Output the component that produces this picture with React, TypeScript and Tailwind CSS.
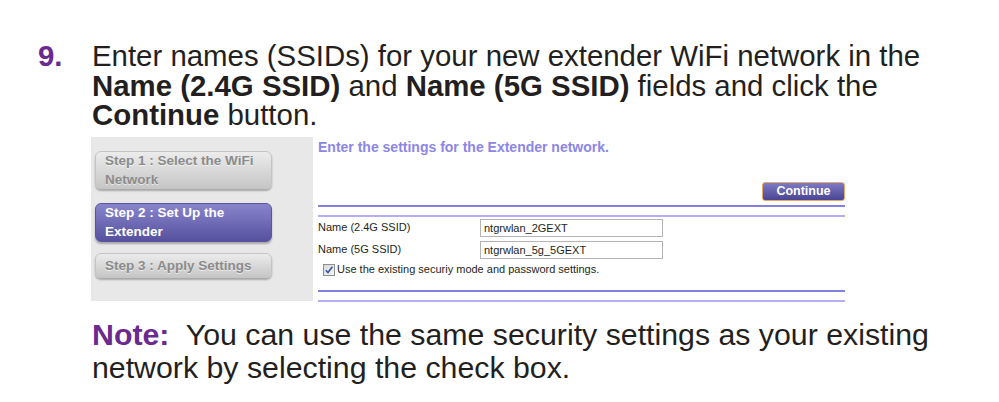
import React from 'react';

const STEPS = [
  { label: ['Step 1 : Select the WiFi', 'Network'], active: false, h: 'h-[38px]' },
  { label: ['Step 2 : Set Up the', 'Extender'], active: true, h: 'h-[39px]' },
  { label: ['Step 3 : Apply Settings'], active: false, h: 'h-[25px]' },
];

function StepButton({ label, active, h }: { label: string[]; active: boolean; h: string }) {
  return (
    <div
      className={`${h} w-[177px] rounded-[6px] px-[9px] flex flex-col justify-center text-[13.5px] font-bold leading-[19px] shadow-[0_2px_2px_rgba(0,0,0,0.28)] ${
        active
          ? 'bg-gradient-to-b from-[#8985cc] to-[#56519e] border border-[#5a55a0] text-white'
          : 'bg-gradient-to-b from-[#ececec] to-[#c6c6c6] border border-[#c4c4c4] text-[#8b8b8b] [text-shadow:0_1px_0_rgba(255,255,255,0.6)]'
      }`}
    >
      {label.map((l) => (
        <span key={l} className="whitespace-nowrap">
          {l}
        </span>
      ))}
    </div>
  );
}

function Checkbox() {
  return (
    <svg width="12" height="12" viewBox="0 0 12 12" className="shrink-0">
      <defs>
        <linearGradient id="cb" x1="0" y1="0" x2="1" y2="1">
          <stop offset="0" stopColor="#d8d8d8" />
          <stop offset="1" stopColor="#f6f6f6" />
        </linearGradient>
      </defs>
      <rect x="0.5" y="0.5" width="11" height="11" fill="url(#cb)" stroke="#8e8f8f" />
      <path d="M2.8 6.2 L5 8.6 L9.4 2.8" fill="none" stroke="#3a55a8" strokeWidth="1.6" />
    </svg>
  );
}

export default function App() {
  return (
    <div className="w-[999px] h-[402px] bg-white overflow-hidden font-['Liberation_Sans',Arial,sans-serif] text-[#231f20]">
      {/* Step heading */}
      <div className="flex pt-[41px] text-[29.4px] leading-[29.5px]">
        <span className="w-[92px] pl-[38px] font-bold text-[#6a2a8e]">9.</span>
        <p className="whitespace-nowrap">
          Enter names (SSIDs) for your new extender WiFi network in the
          <br />
          <b>Name (2.4G SSID)</b> and <b>Name (5G SSID)</b> fields and click the
          <br />
          <b>Continue</b> button.
        </p>
      </div>

      {/* Screenshot */}
      <div className="ml-[91px] mt-[7px] w-[754px] h-[165px] flex">
        <div className="w-[222px] h-[164px] bg-[#e8e8e8] pl-[4px] pt-[14px] flex flex-col">
          <StepButton {...STEPS[0]} />
          <div className="h-[14px]" />
          <StepButton {...STEPS[1]} />
          <div className="h-[11px]" />
          <StepButton {...STEPS[2]} />
        </div>
        <div className="flex-1 pl-[5px] flex flex-col">
          <div className="mt-[2px] h-[16px] leading-[16px] text-[14px] font-bold text-[#8c86e6] whitespace-nowrap">
            Enter the settings for the Extender network.
          </div>
          <div className="mt-[27px] flex justify-end">
            <button className="h-[19px] w-[83px] rounded-[3px] border border-[#e6aa68] bg-gradient-to-b from-[#7e7ac6] to-[#4a4592] text-white text-[12.5px] font-bold leading-none">
              Continue
            </button>
          </div>
          <div className="mt-[4px] h-[2px] bg-[#8480e2]" />
          <div className="mt-[8px] h-[2px] bg-[#b6aef2]" />
          <div className="mt-[2px] h-[18px] flex items-center text-[11px]">
            <span className="w-[162px]">Name (2.4G SSID)</span>
            <div className="h-[18px] w-[183px] border border-[#b4b4b4] pl-[3px] leading-[16px]">ntgrwlan_2GEXT</div>
          </div>
          <div className="mt-[4px] h-[18px] flex items-center text-[11px]">
            <span className="w-[162px]">Name (5G SSID)</span>
            <div className="h-[18px] w-[183px] border border-[#b4b4b4] pl-[3px] leading-[16px]">ntgrwlan_5g_5GEXT</div>
          </div>
          <div className="mt-[4px] h-[14px] pl-[5px] flex items-center gap-[2px] text-[11px]">
            <Checkbox />
            <span className="whitespace-nowrap">Use the existing securiy mode and password settings.</span>
          </div>
          <div className="mt-[13px] h-[2px] bg-[#8480e2]" />
          <div className="mt-[8px] h-[2px] bg-[#b6aef2]" />
        </div>
      </div>

      {/* Note */}
      <p className="ml-[92px] mt-[16px] text-[30.3px] leading-[33px] whitespace-nowrap">
        <b className="text-[#6a2a8e]">Note:</b>
        {'\u00a0 '}You can use the same security settings as your existing
        <br />
        network by selecting the check box.
      </p>
    </div>
  );
}
